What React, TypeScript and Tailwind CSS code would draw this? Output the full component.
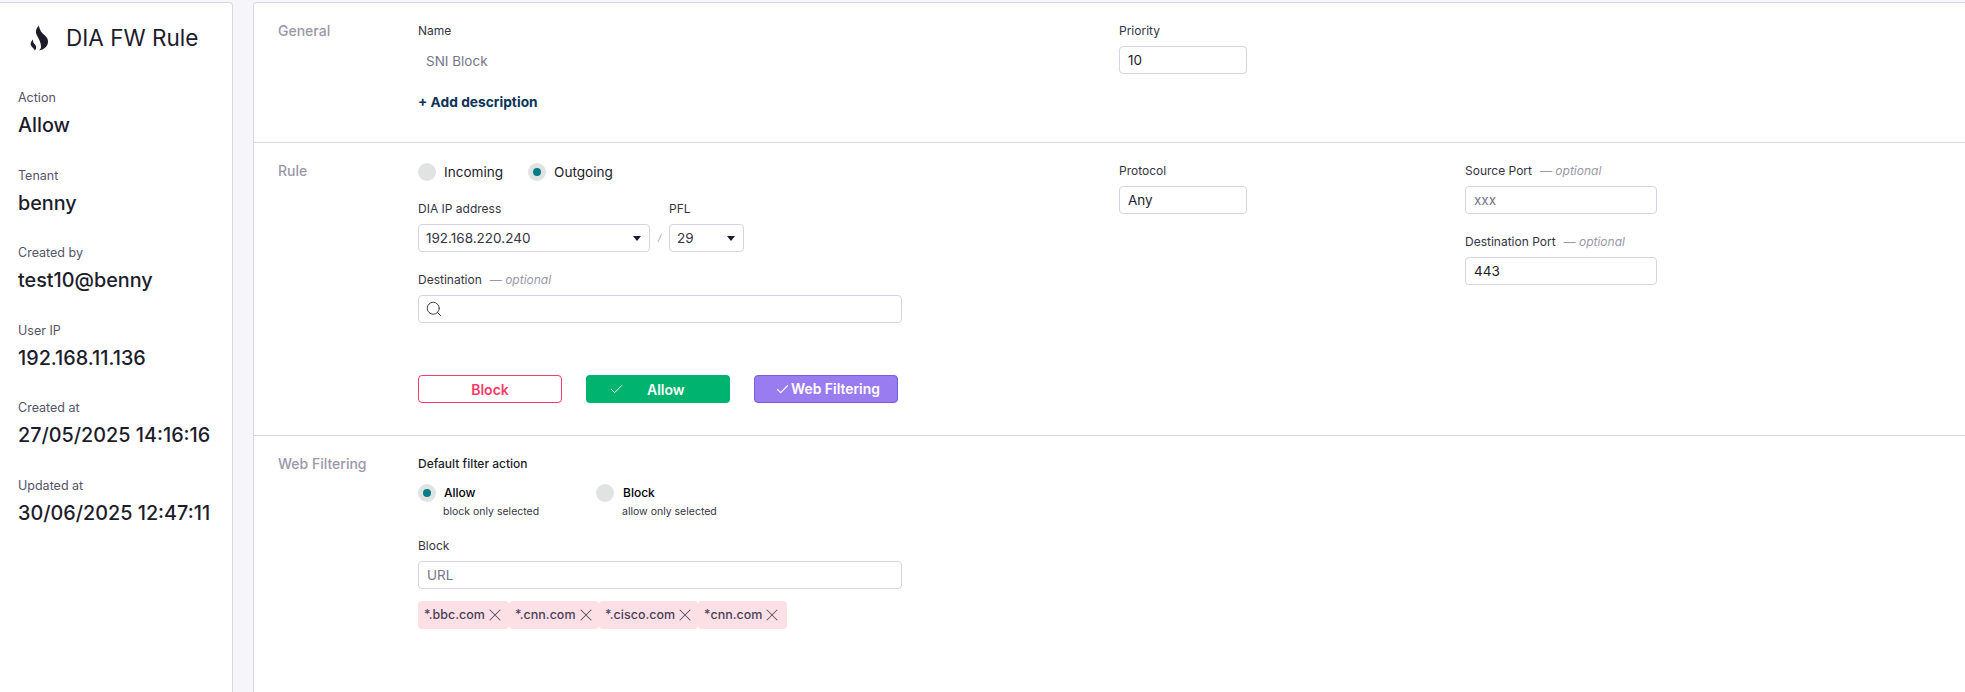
import React from 'react';
import { Check, Search, X } from 'lucide-react';

const infoRows = [
  { label: 'Action', value: 'Allow' },
  { label: 'Tenant', value: 'benny' },
  { label: 'Created by', value: 'test10@benny' },
  { label: 'User IP', value: '192.168.11.136' },
  { label: 'Created at', value: '27/05/2025 14:16:16' },
  { label: 'Updated at', value: '30/06/2025 12:47:11' },
];

const chips = [
  { text: '*.bbc.com', w: 'w-[91px]' },
  { text: '*.cnn.com', w: 'w-[90px]' },
  { text: '*.cisco.com', w: 'w-[99px]' },
  { text: '*cnn.com', w: 'w-[89px]' },
];

function Flame() {
  return (
    <svg width="18" height="26" viewBox="0 0 18 25" className="text-[#1d1c2b]">
      <path
        fill="currentColor"
        d="M9 0C6 3 5 6 7 10C9 14 11 17 11 21C11 23 10 24 9 25C14 24 18 21 18 16C18 11 13 9 11 6C10 4 9 2 9 0Z"
      />
      <path
        fill="currentColor"
        d="M3 14C1 16 0 18 1 20C2 22 4 23 5 25C7 22 6 20 4.500 18.500C3 17 3 15.500 3 14Z"
      />
    </svg>
  );
}

function Radio({ on }: { on?: boolean }) {
  return (
    <span className="flex h-[18px] w-[18px] shrink-0 items-center justify-center rounded-full bg-[#e1e3e3]">
      {on && <span className="h-2 w-2 rounded-full bg-[#047c89]" />}
    </span>
  );
}

function Label({ text, optional }: { text: string; optional?: boolean }) {
  return (
    <div className="flex h-4 items-center text-[12px] leading-4 text-[#353443]">
      {text}
      {optional && <span className="ml-2 italic text-[#9a98a8]">— optional</span>}
    </div>
  );
}

function Caret() {
  return <span className="h-0 w-0 border-x-[4.5px] border-t-[5px] border-x-transparent border-t-[#1d1c2b]" />;
}

function Field({ children, className }: { children?: React.ReactNode; className: string }) {
  return (
    <div className={`flex h-[28px] items-center rounded-[4px] border border-[#d5d3e8] bg-white text-[13.5px] ${className}`}>
      {children}
    </div>
  );
}

function SectionTitle({ text, className = '' }: { text: string; className?: string }) {
  return <div className={`w-[164px] shrink-0 pl-[24px] text-[14px] font-medium leading-4 text-[#9a98a8] ${className}`}>{text}</div>;
}

export default function App() {
  return (
    <div className="flex h-[692px] w-[1965px] overflow-hidden bg-[#f6f6fa] pt-[2px] text-[#1d1c2b] [font-family:Inter,'Liberation_Sans',sans-serif]">
      <aside className="h-[800px] w-[233px] shrink-0 rounded-tr-[4px] border-t border-r border-[#d8d6ea] bg-white">
        <div className="flex h-[70px] items-center pl-[30px]">
          <Flame />
          <h1 className="ml-[18px] text-[22.5px] font-normal leading-8">DIA FW Rule</h1>
        </div>
        <div className="flex flex-col gap-[25.500px] pl-[18px] pt-[15px]">
          {infoRows.map((row) => (
            <div key={row.label} className="h-[52px]">
              <div className="h-5 text-[12.5px] leading-5 text-[#55536a]">{row.label}</div>
              <div className="mt-[3px] text-[19.800px] font-medium leading-7">{row.value}</div>
            </div>
          ))}
        </div>
      </aside>

      <main className="ml-[20px] h-[800px] flex-1 rounded-tl-[4px] border-t border-l border-[#d8d6ea] bg-white">
        <section className="flex h-[140px] border-b border-[#d8d6ea] pt-[20px]">
          <SectionTitle text="General" />
          <div className="grid flex-1 grid-cols-[701px_346px_1fr]">
            <div>
              <Label text="Name" />
              <div className="mt-[12px] pl-2 text-[13.5px] leading-5 text-[#77758a]">SNI Block</div>
              <div className="mt-[21px] text-[13.750px] font-bold leading-5 text-[#0c3458]">+ Add description</div>
            </div>
            <div>
              <Label text="Priority" />
              <Field className="mt-[7px] w-[128px] pl-2">10</Field>
            </div>
          </div>
        </section>

        <section className="flex h-[293px] border-b border-[#d8d6ea] pt-[20px]">
          <SectionTitle text="Rule" />
          <div className="grid flex-1 grid-cols-[701px_346px_1fr]">
            <div>
              <div className="flex h-[18px] items-center text-[13.6px]">
                <Radio />
                <span className="ml-2 w-[84px] pt-px">Incoming</span>
                <Radio on />
                <span className="ml-2 pt-px">Outgoing</span>
              </div>
              <div className="mt-[20px] flex items-end">
                <div>
                  <Label text="DIA IP address" />
                  <Field className="mt-[7px] w-[232px] justify-between pl-[7px] pr-[8px] text-[#353443]">
                    192.168.220.240
                    <Caret />
                  </Field>
                </div>
                <span className="flex h-[28px] w-[19px] items-center justify-center text-[9px] italic text-[#9a98a8]">/</span>
                <div>
                  <Label text="PFL" />
                  <Field className="mt-[7px] w-[75px] justify-between pl-[7px] pr-[8px] text-[#353443]">
                    29
                    <Caret />
                  </Field>
                </div>
              </div>
              <div className="mt-[20px]">
                <Label text="Destination" optional />
                <Field className="mt-[7px] w-[484px] pl-[6px]">
                  <Search size={18} strokeWidth={1.25} className="text-[#353443]" />
                </Field>
              </div>
              <div className="mt-[52px] flex gap-6 text-[14px] font-semibold">
                <button className="h-[28px] w-[144px] rounded-[4px] border border-[#fa3a68] bg-white text-[#fa3a68]">Block</button>
                <button className="flex h-[28px] w-[144px] items-center rounded-[4px] bg-[#00b36f] pl-[23px] text-white">
                  <Check size={15} strokeWidth={1.5} />
                  <span className="ml-[23px]">Allow</span>
                </button>
                <button className="flex h-[28px] w-[144px] items-center rounded-[4px] border border-[#7a5be0] bg-[#9a7cf1] pl-[20px] text-[13.9px] text-white">
                  <Check size={15} strokeWidth={1.75} />
                  <span className="ml-px">Web Filtering</span>
                </button>
              </div>
            </div>
            <div>
              <Label text="Protocol" />
              <Field className="mt-[7px] w-[128px] pl-2">Any</Field>
            </div>
            <div>
              <Label text="Source Port" optional />
              <Field className="mt-[7px] w-[192px] pl-2 text-[#77758a]">xxx</Field>
              <div className="mt-[20px]">
                <Label text="Destination Port" optional />
                <Field className="mt-[7px] w-[192px] pl-2">443</Field>
              </div>
            </div>
          </div>
        </section>

        <section className="flex pt-[18px]">
          <SectionTitle text="Web Filtering" className="mt-[2px]" />
          <div className="flex-1">
            <div className="text-[12px] font-medium leading-5">Default filter action</div>
            <div className="mt-[10px] flex text-[12px] font-medium leading-[18px] text-black">
              <div className="w-[178px]">
                <div className="flex items-center">
                  <Radio on />
                  <span className="ml-2">Allow</span>
                </div>
                <div className="ml-[25px] mt-[2px] text-[10.5px] font-normal leading-4 text-[#353443]">block only selected</div>
              </div>
              <div>
                <div className="flex items-center">
                  <Radio />
                  <span className="ml-[9px]">Block</span>
                </div>
                <div className="ml-[26px] mt-[2px] text-[10.5px] font-normal leading-4 text-[#353443]">allow only selected</div>
              </div>
            </div>
            <div className="mt-[18px]">
              <Label text="Block" />
              <Field className="mt-[7px] w-[484px] pl-2 text-[#77758a]">URL</Field>
            </div>
            <div className="mt-3 flex">
              {chips.map((chip) => (
                <div key={chip.text} className={`flex h-[28px] items-center rounded-[4px] bg-[#fde0e6] pl-[6px] text-[12.5px] font-medium text-[#4c4058] ${chip.w}`}>
                  {chip.text}
                  <X size={20} strokeWidth={1.25} className="text-[#5c5468]" />
                </div>
              ))}
            </div>
          </div>
        </section>
      </main>
    </div>
  );
}
